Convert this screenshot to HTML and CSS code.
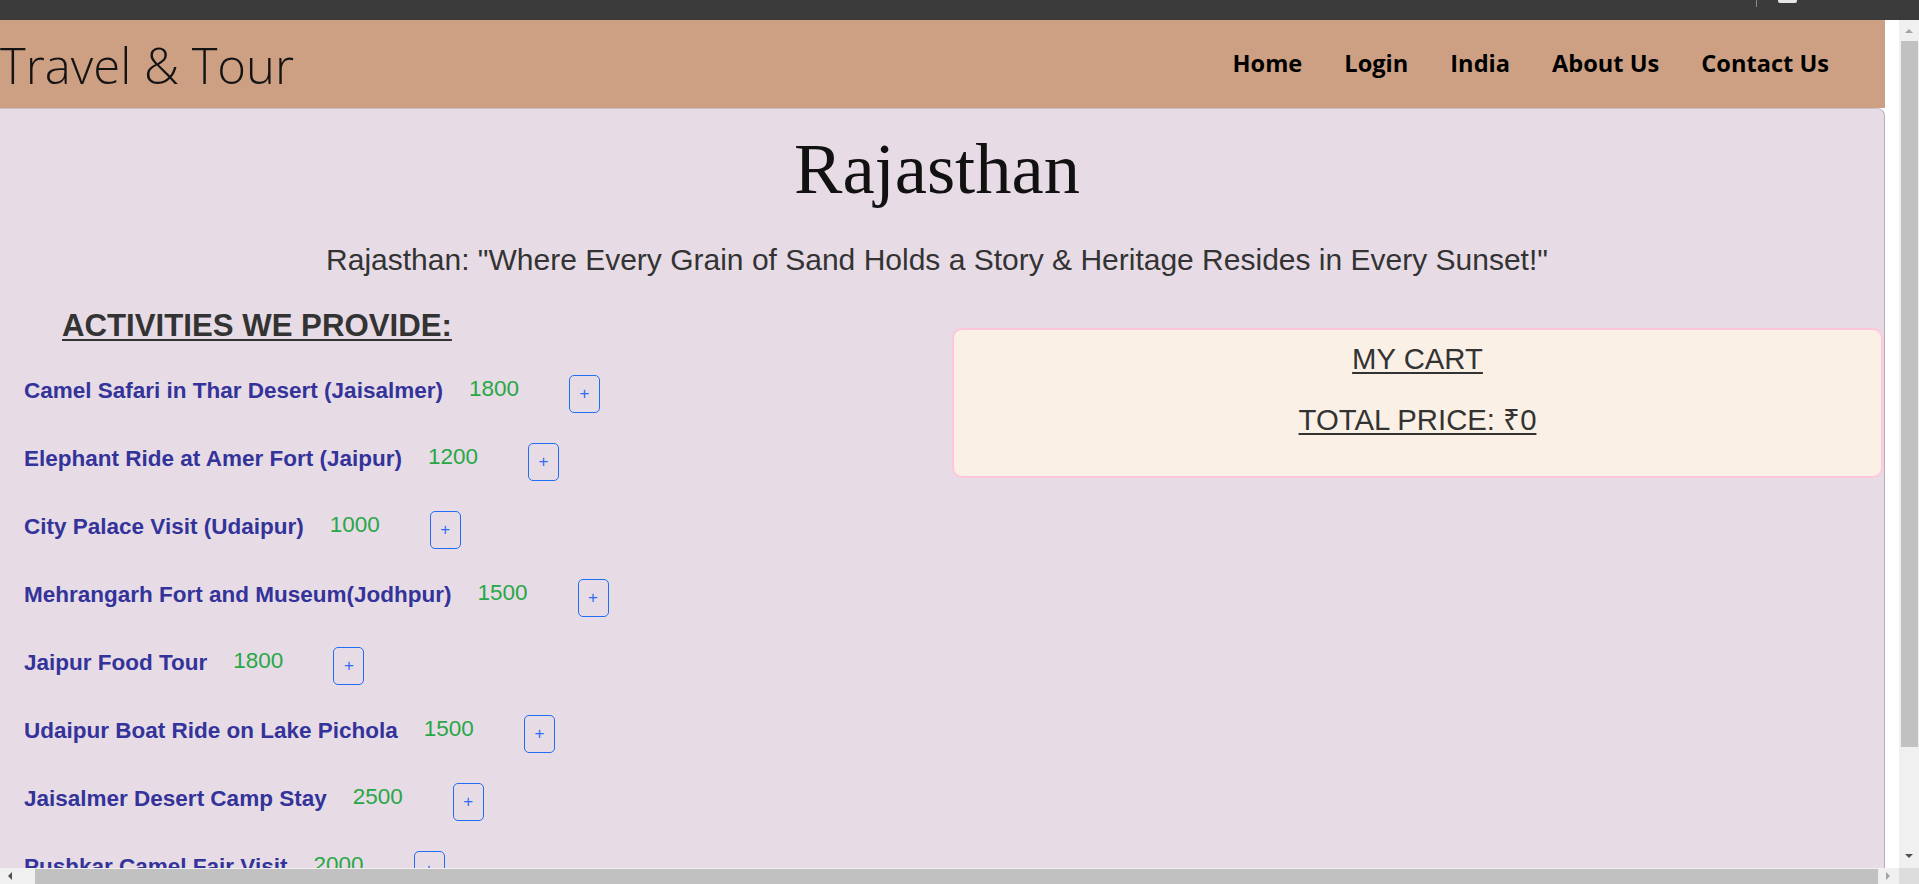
FILE: index.html
```html
<!DOCTYPE html>
<html lang="en">
<head>
<meta charset="utf-8">
<title>Rajasthan - Travel &amp; Tour</title>
<link rel="stylesheet" href="styles.css">
</head>
<body>
<div class="chrome-top">
  <span class="chrome-line"></span>
  <span class="chrome-box"></span>
</div>
<div class="window">
  <div class="viewport">
    <div class="page">
      <header class="site-header">
        <div class="logo">Travel &amp; Tour</div>
        <nav class="nav">
          <a href="#">Home</a>
          <a href="#">Login</a>
          <a href="#">India</a>
          <a href="#">About Us</a>
          <a href="#">Contact Us</a>
        </nav>
      </header>
      <main class="main">
        <h1 class="title">Rajasthan</h1>
        <p class="tagline">Rajasthan: "Where Every Grain of Sand Holds a Story &amp; Heritage Resides in Every Sunset!"</p>
        <div class="content">
          <section class="activities">
            <h2 class="act-heading">ACTIVITIES WE PROVIDE:</h2>
            <div class="act-list">
              <div class="act-row"><span class="act-name">Camel Safari in Thar Desert (Jaisalmer)</span><span class="act-price">1800</span><button class="add-btn">+</button></div>
              <div class="act-row"><span class="act-name">Elephant Ride at Amer Fort (Jaipur)</span><span class="act-price">1200</span><button class="add-btn">+</button></div>
              <div class="act-row"><span class="act-name">City Palace Visit (Udaipur)</span><span class="act-price">1000</span><button class="add-btn">+</button></div>
              <div class="act-row"><span class="act-name">Mehrangarh Fort and Museum(Jodhpur)</span><span class="act-price">1500</span><button class="add-btn">+</button></div>
              <div class="act-row"><span class="act-name">Jaipur Food Tour</span><span class="act-price">1800</span><button class="add-btn">+</button></div>
              <div class="act-row"><span class="act-name">Udaipur Boat Ride on Lake Pichola</span><span class="act-price">1500</span><button class="add-btn">+</button></div>
              <div class="act-row"><span class="act-name">Jaisalmer Desert Camp Stay</span><span class="act-price">2500</span><button class="add-btn">+</button></div>
              <div class="act-row"><span class="act-name">Pushkar Camel Fair Visit</span><span class="act-price">2000</span><button class="add-btn">+</button></div>
            </div>
          </section>
          <aside class="cart">
            <div class="cart-title">MY CART</div>
            <div class="cart-total">TOTAL PRICE: ₹0</div>
          </aside>
        </div>
      </main>
    </div>
  </div>
  <div class="vscroll">
    <div class="arrow-up"></div>
    <div class="vthumb"></div>
    <div class="vspace"></div>
    <div class="arrow-down"></div>
  </div>
  <div class="hscroll">
    <div class="hbtn-left"><span class="arrow-left"></span></div>
    <div class="hthumb"></div>
    <div class="hbtn-right"><span class="arrow-right"></span></div>
  </div>
  <div class="corner"></div>
</div>
</body>
</html>
```
FILE: styles.css
```css
html, body {
  margin: 0;
  padding: 0;
  width: 1919px;
  height: 884px;
  overflow: hidden;
  background: #ffffff;
  font-family: "Liberation Sans", Arial, sans-serif;
}

/* top dark strip */
.chrome-top {
  height: 20px;
  background: #3b3b3b;
  display: flex;
  align-items: flex-start;
  justify-content: flex-end;
  padding-right: 122px;
}
.chrome-line {
  width: 1px;
  height: 7px;
  background: #8a8a8a;
  margin-right: 21px;
}
.chrome-box {
  width: 19px;
  height: 3px;
  background: #e6e6e6;
  border-radius: 0 0 2px 2px;
}

.window {
  display: grid;
  grid-template-columns: 1899px 20px;
  grid-template-rows: 848px 16px;
}

.viewport {
  overflow: hidden;
  background: #ffffff;
}

.page {
  width: 1885px;
}

/* header */
.site-header {
  height: 88px;
  background: #cda083;
  display: flex;
  align-items: center;
  justify-content: space-between;
}
.logo {
  font-family: "Open Sans", sans-serif;
  font-weight: 300;
  font-size: 49px;
  color: #141414;
  line-height: 1;
  padding-top: 2px;
}
.nav {
  display: flex;
  gap: 42px;
  padding-right: 56px;
}
.nav a {
  font-family: "Open Sans", sans-serif;
  font-weight: 700;
  font-size: 23.6px;
  color: #000;
  text-decoration: none;
  line-height: 1;
}

/* main */
.main {
  height: 759px;
  background: #e7dce6;
  border-top: 1px solid #cbbfca;
  border-right: 1px solid #b7abb7;
  border-top-right-radius: 8px;
  overflow: hidden;
}
.title {
  margin: 20px 0 0;
  padding-right: 10px;
  text-align: center;
  font-family: "Liberation Serif", "Times New Roman", serif;
  font-weight: 400;
  font-size: 72.5px;
  line-height: 80px;
  color: #111;
}
.tagline {
  margin: 34px 0 0;
  padding-right: 10px;
  text-align: center;
  font-size: 30px;
  line-height: 34px;
  color: #333;
}

.content {
  margin-top: 31px;
  display: grid;
  grid-template-columns: 952px 1fr;
}

.act-heading {
  margin: 0 0 0 62px;
  font-size: 31.2px;
  line-height: 35px;
  font-weight: 700;
  color: #333;
  text-decoration: underline;
  text-decoration-thickness: 2px;
  text-underline-offset: 3px;
}
.act-list {
  margin-top: 35px;
  padding-left: 24px;
  display: flex;
  flex-direction: column;
  gap: 42px;
}
.act-row {
  display: flex;
  align-items: flex-start;
  height: 26px;
}
.act-name {
  font-size: 22.5px;
  line-height: 26px;
  font-weight: 700;
  color: #33339a;
}
.act-price {
  margin: -2px 0 0 26px;
  font-size: 22.5px;
  line-height: 26px;
  color: #28a745;
}
.add-btn {
  margin: -3px 0 0 50px;
  width: 31px;
  height: 38px;
  padding: 0 0 1px;
  display: flex;
  align-items: center;
  justify-content: center;
  background: transparent;
  border: 1px solid #1f6ef5;
  border-radius: 5px;
  color: #2d6cf5;
  font-family: "Liberation Sans", Arial, sans-serif;
  font-size: 17px;
  line-height: 1;
}

/* cart */
.cart {
  margin: 20px 1px 0 0;
  height: 146px;
  background: #faf0e6;
  border: 2px solid #ffc6dc;
  border-radius: 10px;
  box-sizing: content-box;
  text-align: center;
  color: #333;
  font-size: 29.3px;
  line-height: 33px;
}
.cart-title {
  margin-top: 12px;
  text-decoration: underline;
  text-decoration-thickness: 2px;
  text-underline-offset: 3px;
}
.cart-total {
  margin-top: 28px;
  text-decoration: underline;
  text-decoration-thickness: 2px;
  text-underline-offset: 3px;
}

/* fake scrollbars */
.vscroll {
  grid-row: 1;
  grid-column: 2;
  background: #f0f0f0;
  display: flex;
  flex-direction: column;
  align-items: center;
}
.arrow-up {
  margin-top: 9px;
  margin-bottom: 8px;
  width: 0;
  height: 0;
  border-left: 4px solid transparent;
  border-right: 4px solid transparent;
  border-bottom: 4px solid #a3a3a3;
}
.vthumb {
  width: 17px;
  height: 706px;
  background: #c1c1c1;
}
.vspace {
  flex: 1;
}
.arrow-down {
  margin-bottom: 10px;
  width: 0;
  height: 0;
  border-left: 4px solid transparent;
  border-right: 4px solid transparent;
  border-top: 4px solid #505050;
}
.hscroll {
  grid-row: 2;
  grid-column: 1;
  background: #f0f0f0;
  display: flex;
}
.hbtn-left {
  width: 35px;
  display: flex;
  align-items: center;
  padding-left: 8px;
  box-sizing: border-box;
}
.arrow-left {
  width: 0;
  height: 0;
  border-top: 4px solid transparent;
  border-bottom: 4px solid transparent;
  border-right: 4px solid #505050;
}
.hthumb {
  width: 1843px;
  margin-top: 1px;
  background: #c1c1c1;
}
.hbtn-right {
  flex: 1;
  display: flex;
  align-items: center;
  padding-left: 8px;
}
.arrow-right {
  width: 0;
  height: 0;
  border-top: 4px solid transparent;
  border-bottom: 4px solid transparent;
  border-left: 4px solid #a3a3a3;
}
.corner {
  grid-row: 2;
  grid-column: 2;
  background: #dcdcdc;
}
```
